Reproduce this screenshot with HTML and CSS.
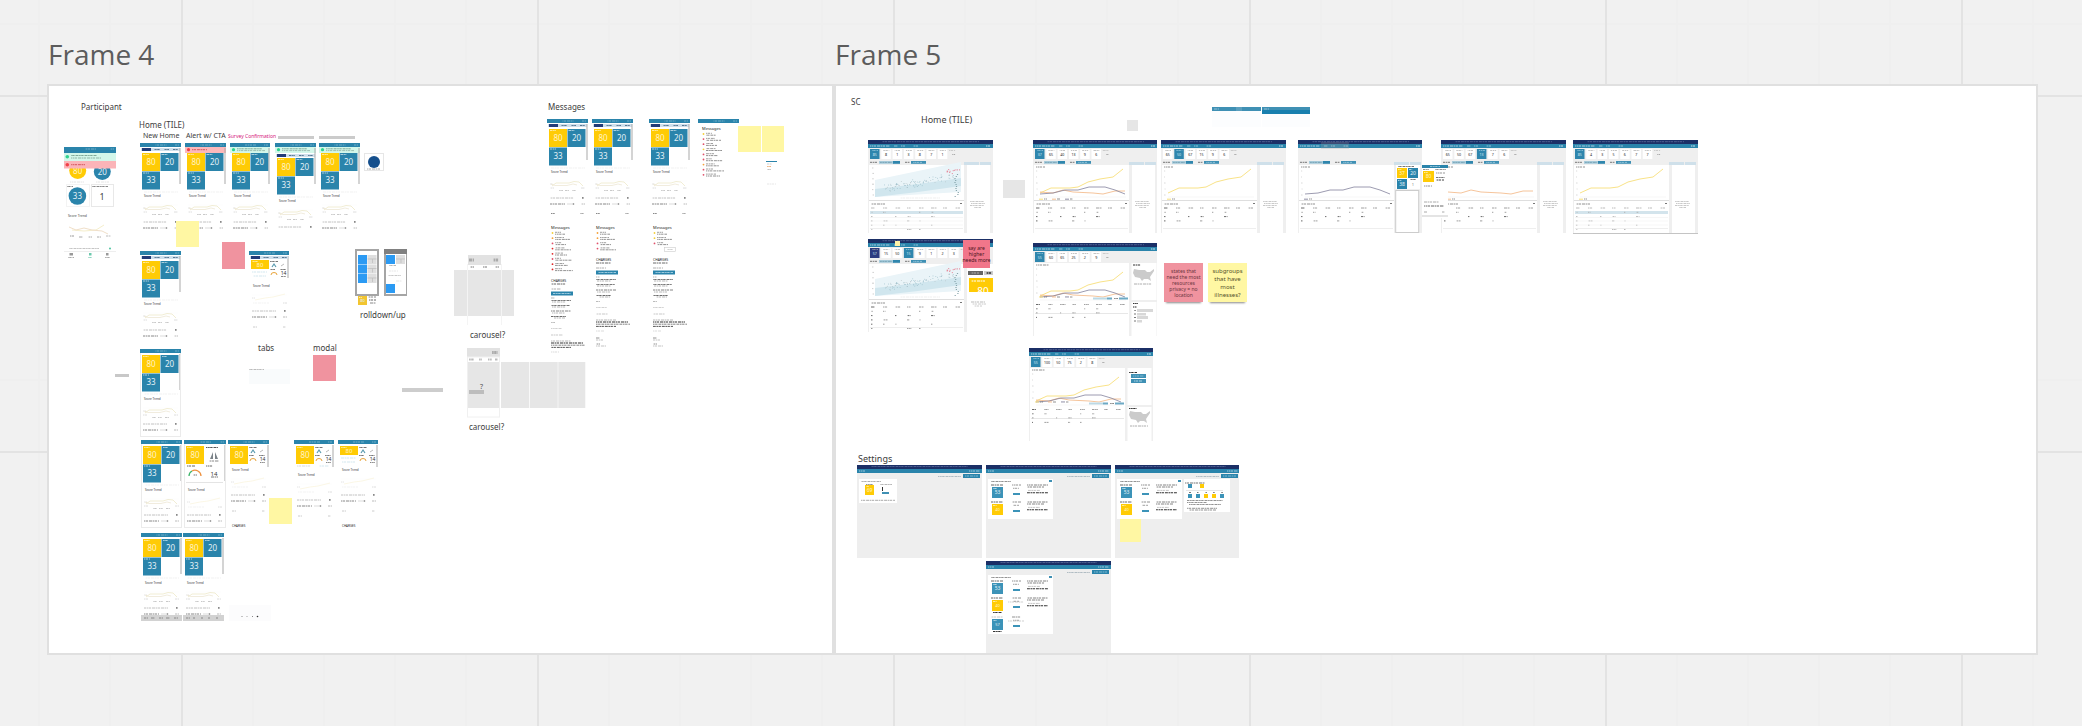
FILE: index.html
```html
<!DOCTYPE html>
<html lang="en">
<head>
  <meta charset="UTF-8" />
  <meta name="viewport" content="width=device-width, initial-scale=1.0" />
  <title>Board</title>
  <link rel="stylesheet" href="styles.css">
</head>
<body>
  <main class="board">
    <section class="frame frame-4">
      <h2>Frame 4</h2>
      <div class="canvas" id="frame4"></div>
    </section>
    <section class="frame frame-5">
      <h2>Frame 5</h2>
      <div class="canvas" id="frame5"></div>
    </section>
  </main>
  <script src="script.js"></script>
</body>
</html>
```

FILE: styles.css
```css
* {
  box-sizing: border-box;
}
body {
  margin: 0;
  background-color: #f1f1f1;
  background-image:
    linear-gradient(90deg, #e3e3e3 2px, transparent 2px),
    linear-gradient(#e3e3e3 2px, transparent 2px),
    linear-gradient(90deg, transparent 71px, #efefef 71px, #efefef 73px, transparent 73px, transparent 142px, #efefef 142px, #efefef 144px, transparent 144px, transparent 213px, #efefef 213px, #efefef 215px, transparent 215px, transparent 284px, #efefef 284px, #efefef 286px, transparent 286px),
    linear-gradient(transparent 284px, #efefef 284px, #efefef 286px, transparent 286px);
  background-size: 356px 356px;
  background-position: 181px 95px;
  font-family: "Noto Sans", "Open Sans", sans-serif;
  color: #3c3c3c;
}
.board {
  display: flex;
  height: 100vh;
  padding: 34px 44px 71px 47px;
}
.frame {
  display: flex;
  flex-direction: column;
  min-width: 0;
}
.frame-4 {
  flex: 787 1 0;
}
.frame-5 {
  flex: 1204 1 0;
}
.frame h2 {
  margin: 0;
  padding-left: 1px;
  height: 50px;
  font-family: "Open Sans", sans-serif;
  font-size: 28px;
  line-height: 40px;
  font-weight: 400;
  color: #5c5c5c;
}
.canvas {
  position: relative;
  flex: 1;
  background: #fff;
  border: 2px solid #e0e0e0;
  overflow: hidden;
}

/* widgets placed on the canvas */
.item {
  position: absolute;
  display: block;
  overflow: hidden;
}
.label {
  position: absolute;
  white-space: nowrap;
  line-height: 12px;
  font-size: 8px;
}
.label.small {
  font-size: 7px;
}
.label.tiny {
  font-size: 5px;
  color: #d6207c;
}
.label.large {
  font-size: 9px;
}
.sticky {
  position: absolute;
  display: flex;
  align-items: center;
  justify-content: center;
  text-align: center;
  white-space: nowrap;
  font-size: 5px;
  line-height: 6px;
  color: #6b3540;
}
.sticky.yellow {
  background: #fff7a3;
  color: #54512c;
}
.sticky.pink {
  background: #f0939f;
}
.sticky.deep {
  background: #f1768a;
  color: #4a1420;
}
.sticky.big {
  font-size: 6px;
  line-height: 8px;
}
.sticky.lifted {
  box-shadow: 0 3px 2px -2px #888;
}
svg text {
  font-family: "Noto Sans", "Open Sans", sans-serif;
}
```

FILE: script.js
```js
const BLUE = "#2a84ab";
const NAVY = "#1b2f66";
const YELLOW = "#ffcb05";

// top left corner of each canvas on the board
const frames = {
  frame4: { x: 49, y: 86 },
  frame5: { x: 836, y: 86 }
};

const rect = (x, y, w, h, fill, extra = "") =>
  `<rect x="${x}" y="${y}" width="${w}" height="${h}" fill="${fill}" ${extra}/>`;

const line = (points, color, width = 1) =>
  `<polyline points="${points}" fill="none" stroke="${color}" stroke-width="${width}"/>`;

const text = (x, y, size, color, value, anchor = "middle") =>
  `<text x="${x}" y="${y}" font-size="${size}" fill="${color}" text-anchor="${anchor}">${value}</text>`;

// a line of copy at thumbnail scale
const copy = (x, y, w, color = "#aaa", h = 1) =>
  `<line x1="${x}" y1="${y}" x2="${x + w}" y2="${y}" stroke="${color}" stroke-width="${h}" stroke-dasharray="3 .6 1.6 .5 2.4 .9" stroke-dashoffset="${(x * 7 + y * 3) % 5}"/>`;

const dot = (x, y, r, fill) => `<circle cx="${x}" cy="${y}" r="${r}" fill="${fill}"/>`;

function tile(x, y, w, h, color, value, size = 8) {
  return rect(x, y, w, h, color) +
    copy(x + 1, y + 1.5, w / 3, "#fff9") +
    (value ? text(x + w / 2, y + h / 2 + size * 0.36, size, color === YELLOW ? "#fff3c4" : "#e3f1f7", value) : "");
}

function bar(w, h = 4) {
  return rect(0, 0, w, h, BLUE) + copy(w / 2 - 5, 2, 11, "#6fadc8") + copy(w - 6, 2, 4, "#6fadc8");
}

function alertBar(w, y, bg, color) {
  return rect(0, y, w, 6, bg) + dot(3.5, y + 2.7, 1.6, color) +
    (color === "#2fd38f" ? copy(7, y + 1.8, 25, "#7fa898") + copy(7, y + 3.6, 28, "#9dbfb2") : copy(7, y + 2.7, 15, "#d3585c"));
}

function nav(w, y) {
  return rect(1, y, w - 2, 3, "#cfdfeb") + rect(2, y, 9, 3, "#233c78") +
    copy(14, y + 1.5, 6, "#5a7893") + copy(24, y + 1.5, 5, "#5a7893") + copy(33, y + 1.5, 5, "#5a7893");
}

function trend(y, flat) {
  let out = text(4, y + 4, 3, "#333", "Score Trend", "start") +
    line(`3,${y + 12} 38,${y + 12}`, "#f8f8f8", 0.5) + copy(3, y + 15, 3, "#ddd", 0.8);
  if (flat) {
    out += line(`6,${y + 17} 16,${y + 15} 24,${y + 14} 36,${y + 11}`, "#faf5df", 0.8) +
      copy(4, y + 20, 16, "#eee", 0.7) + copy(34, y + 20, 4, "#d5d5d5", 0.8);
  } else {
    out += line(`5,${y + 17} 9,${y + 14} 22,${y + 14} 27,${y + 12.5} 32,${y + 13} 36,${y + 17}`, "#eee8c9", 0.8) +
      line(`4,${y + 15} 8,${y + 16.5} 20,${y + 16.5} 26,${y + 15} 30,${y + 16}`, "#e8dfc8", 0.6) +
      copy(3, y + 19, 4, "#d5d5d5", 0.8) + copy(34, y + 19, 4, "#d5d5d5", 0.8) +
      copy(12, y + 21.5, 4, "#bbb", 0.8) + copy(18, y + 21.5, 4, "#bbb", 0.8) + copy(25, y + 21.5, 4, "#bbb", 0.8);
  }
  return out;
}

function lastRows(y) {
  return copy(3, y, 24, "#c2c2c2") + rect(35, y - 1, 1.6, 1.8, "#888") +
    copy(3, y + 6, 15, "#888") + line(`20,${y + 6} 26,${y + 6}`, "#ccc", 0.7) + dot(26.5, y + 6, 0.8, "#777") + copy(34, y + 6, 4, "#bbb");
}

function miniIcons(x, y) {
  return copy(x, y + 1.5, 8, "#777") +
    line(`${x + 2},${y + 7} ${x + 4},${y + 4} ${x + 6},${y + 7}`, "#5a9bb0", 1.2) +
    line(`${x + 11},${y + 6} ${x + 14},${y + 4}`, "#bbb") +
    copy(x, y + 9.5, 5, "#777") + copy(x + 10, y + 9.5, 6, "#777") +
    `<path d="M${x + 1} ${y + 15}a3 2.5 0 0 1 6 0" fill="none" stroke="#e9a53c"/>` +
    text(x + 13.5, y + 15, 5, "#333", "14") + copy(x + 11, y + 16.5, 5, "#888");
}

function tiles(top) {
  return tile(2, top, 18, 18, YELLOW, "80") + tile(20.5, top, 18, 18, BLUE, "20") + tile(2, top + 18.5, 18, 18, BLUE, "33") +
    copy(4, top + 39, 34, "#e8e8e8", 0.6);
}

function phone(o) {
  const w = o.w || 41, h = o.h || 88;
  let s = bar(w);
  let top = 6;
  if (o.alert === "green") { s += alertBar(w, 4, "#d3f7ea", "#2fd38f"); top = 10; }
  if (o.alert === "red") { s += alertBar(w, 4, "#fbb9bb", "#f04048"); top = 10; }
  if (o.nav) { s += nav(w, o.alert ? 11 : 5); top = o.alert ? 15 : 10; }
  if (o.kind === "grid") {
    s += tile(2, 6, 18, 18, YELLOW, "80") + copy(22, 7.5, 12, "#555") +
      `<path d="M26 19l3-7v7zM34 19l-3-7v7z" fill="#7a8288"/>` + copy(25, 21, 10, "#888") +
      copy(3, 26, 8, "#666") + copy(22, 26, 7, "#666") +
      `<path d="M5 36a6 6 0 0 1 3-5" fill="none" stroke="#3fb56b" stroke-width="1.3"/><path d="M8 31a6 6 0 0 1 9 5" fill="none" stroke="#ee9240" stroke-width="1.3"/>` +
      copy(9, 35, 4, "#777") + text(30, 35.5, 6, "#333", "14") + copy(27, 37, 7, "#777") +
      line("2,42.5 39,42.5", "#ddd", 0.8) + trend(47, true) + lastRows(75);
  } else if (o.kind === "compact") {
    const t = o.nav ? 9 : 6;
    const sh = o.shift || 0;
    const d = sh + (o.nav ? 5 : 0);
    s += tile(2, t, 18, o.short ? 9 : 18, YELLOW, "80", o.short ? 6 : 8) + miniIcons(21, t);
    if (o.short) s += copy(3, t + 12, 15, "#c0dce8", 0.7) + copy(4, t + 16, 13, "#c0dce8", 0.7);
    if (sh) s += copy(3, 26, 14, "#ccc", 0.7) + copy(25, 26, 10, "#c0dce8", 0.7);
    s += trend(27 + d, true) + lastRows(55 + d) + copy(4, 71 + d, 4, "#ccc") + copy(34, 71 + d, 3, "#ccc");
    if (o.charges) s += text(4, 86.5, 3, "#222", "CHARGES", "start");
  } else {
    s += tiles(top) + trend(o.nav || o.alert ? top + 40 : 47) + lastRows(o.nav || o.alert ? top + 69 : 75);
  }
  s += rect(w - 1.5, 5, 1, o.kind === "compact" ? 22 : 36, "#aaa");
  if (o.footer) {
    s += rect(0, h - 6, w, 6, "#d2d2d2");
    for (const x of [3, 10, 18, 25, 33]) s += copy(x, h - 3, o.footer === 2 && x > 3 ? 2 : 4, "#8a8a8a");
  }
  if (o.border) s += rect(0.5, 0.5, w - 1, h - 1, "none", 'stroke="#ebebeb"') + bar(w);
  return s;
}

function circlePhone() {
  return rect(0, 0, 52, 112, "#fff") +
    dot(13.7, 23.6, 8.5, YELLOW) + text(13.7, 26.5, 8, "#fff3c4", "80") +
    dot(38.3, 24.5, 8.5, BLUE) + text(38.3, 27.5, 8, "#e3f1f7", "20") +
    bar(52, 6) + rect(0, 6, 52, 8, "#d3f7ea") + dot(3.3, 9.7, 1.8, "#2fd38f") + copy(7, 8.5, 26, "#7fa898") + copy(7, 11, 30, "#8fb5a6") +
    rect(0, 14, 52, 7.5, "#fbb4b8") + dot(3.3, 17.7, 1.8, "#f04048") + copy(7, 17.7, 14, "#d3585c") +
    copy(6, 35, 14, "#e4e4e4") + copy(32, 35, 13, "#e4e4e4") + copy(3, 39.5, 6, "#888") + copy(28, 39.5, 16, "#888") +
    rect(2.5, 37.5, 23, 22, "none", 'stroke="#f3f3f3"') + rect(27.5, 37.5, 22, 22, "none", 'stroke="#e8e8e8"') +
    dot(13.4, 49, 8.8, BLUE) + text(13.4, 52, 8, "#e3f1f7", "33") + text(38, 52.5, 9, "#444", "1") +
    text(4, 70, 3.4, "#444", "Score Trend", "start") +
    line("8,83 20,84 32,83 40,78", "#f5eecb") + line("5,80 12,83 20,81 28,83 38,84 44,87", "#f0dfc9") +
    copy(6, 89, 4, "#999") + copy(42, 89, 5, "#bbb") + copy(15, 90, 4, "#aaa") + copy(24, 90, 4, "#aaa") + copy(33, 90, 4, "#aaa") +
    copy(5, 101.5, 30, "#c5c5c5") + dot(46, 101.5, 1, "#4cc3a0") +
    line("0,104.5 52,104.5", "#eee") + rect(5.5, 106, 3.5, 2.5, "#999") + rect(25, 106, 2.5, 2.5, "#6cc9ae") + rect(42, 106, 2.5, 2.5, "#999") +
    copy(4, 110.5, 6, "#aaa") + copy(24, 110.5, 4, "#8fd5c0") + copy(41, 110.5, 5, "#aaa");
}

function messageList(y, colors, gap = 5.2) {
  let s = text(4, y + 1.5, 4, "#222", "Messages", "start");
  colors.forEach((c, i) => {
    const r = y + 6 + i * gap;
    s += dot(5.5, r, 0.9, c) + copy(8, r - 0.7, 6 + (i * 3) % 5, "#777", 0.7) + copy(8, r + 1.2, 10 + (i * 5) % 9, "#777", 0.8);
  });
  return s;
}

function messagePhone(o) {
  let s = phone({ nav: true }) + copy(4, 94.5, 4, "#888") + copy(33, 94.5, 4, "#aaa") + messageList(108, o.rows);
  if (o.more) s += rect(15.5, 128.5, 11, 4, "#fff", 'stroke="#ccc" stroke-width=".6"') + copy(18, 130.5, 6, "#bbb", 0.7);
  const y = o.charges;
  return s + text(4, y + 2, 3.4, "#222", "CHARGES", "start") + copy(4, y + 4, 15, "#444", 0.8) +
    copy(4, y + 9, 10, "#999", 0.8) + rect(4, y + 11.5, 22, 4, BLUE) + copy(6, y + 13.5, 18, "#9dcbdf") +
    copy(4, y + 18, 4, "#999", 0.7) + copy(4, y + 20.5, 20, "#555", 0.8) + copy(5, y + 22, 14, "#999", 0.7) +
    copy(4, y + 25.5, 19, "#555", 0.8) + copy(5, y + 27, 14, "#999", 0.7) + copy(4, y + 31, 20, "#666", 0.8) + copy(5, y + 33, 13, "#999", 0.7) +
    copy(4, y + 36.5, 15, "#444", 0.8) + copy(7, y + 38, 11, "#999", 0.7) + copy(4, y + 42.5, 4, "#aaa", 0.8) +
    copy(4, y + 48.5, 11, "#c5c5c5", 0.8) + copy(4, y + 55, 12, "#bbb", 0.8) +
    copy(4, y + 61, 20, "#999", 0.7) + copy(4, y + 63, 32, "#333") + copy(4, y + 65.2, 34, "#666", 0.8) + copy(4, y + 67.4, 20, "#444", 0.9) + copy(4, y + 72, 8, "#ccc", 0.7) +
    (y < 150 ? copy(4, y + 79, 4, "#777", 0.8) + copy(4, y + 81, 7, "#aaa", 0.7) + copy(4, y + 85, 4, "#777", 0.8) + copy(4, y + 87, 10, "#aaa", 0.7) : "");
}

// repeatable noise, so the plot looks the same on each load
const noise = (n) => {
  const v = Math.sin(n * 12.9898) * 43758.5453;
  return v - Math.floor(v);
};

function scatter() {
  let s = `<path d="M7 40L93 22V52L7 57z" fill="#eaf4f8"/><path d="M7 49L50 44L93 38V46L50 52L7 57z" fill="#d0e6ee"/>`;
  for (let i = 0; i < 90; i++) {
    const x = 16 + noise(i + 1) * 70;
    const y = 50 - (x - 16) * 0.17 + noise(i + 200) * 8 - 6;
    s += rect(x.toFixed(1), y.toFixed(1), 0.8, 0.7, i % 3 ? "#94b9c5" : "#b3bfc3");
  }
  for (let i = 0; i < 12; i++) s += rect((77 + noise(i + 40) * 15).toFixed(1), (29 + noise(i + 60) * 5).toFixed(1), 1, 1, "#e58295");
  for (let i = 0; i < 12; i++) s += rect((86 + noise(i + 80) * 4).toFixed(1), 34 + i * 2, 1.2, 0.9, "#7c9ca3");
  for (let i = 0; i < 6; i++) s += copy(4, 28 + i * 5.4, 2, "#bbb", 0.7);
  return s + copy(32, 58, 40, "#e4e4e4", 0.6);
}

const curves = {
  yellow: ["7,53 18,48 37,48 45,47 55,42 67,39 80,37 90,29", "#f6da6a"],
  navy: ["7,54 20,53 32,50 45,50 56,47 72,47 82,50 92,54", "#83829c"],
  orange: ["7,52 20,53 30,50 40,52 60,53 70,54 82,51 92,51", "#f2b582"]
};

const usMap = (x, y) =>
  `<path transform="translate(${x} ${y})" d="M1 1L6 2L12 2L14 4L17 4L21 1L21 3L19 6L17 9L18 13L15 11L11 11L9 13L7 10L2 9L0 5z" fill="#cbcbcb"/>` +
  copy(x + 1, y + 16, 18, "#999", 0.8);

function table(y, w, rows, hl) {
  let s = "";
  if (hl !== undefined) s += rect(2, y + 3, w - 1, 3, "#d3e4ec");
  for (let r = 0; r < rows; r++) {
    const ry = y + r * 4.3;
    for (let c = 0; c < 8; c++) {
      if (r && (c * 5 + r * 3) % 7 > 3 && c) continue;
      const cw = r ? 1.5 + (c * r) % 4 : 4 + (c % 3);
      if (r && c > 5) continue;
      s += copy(3 + c * 12, ry, cw, hl ? "#aaa" : r === 2 || c === 0 ? "#444" : "#888", 0.8);
    }
  }
  return s;
}

function dashboard(o) {
  const w = 124, alt = o.side === "map" || o.side === "buttons";
  const bodyTop = alt ? 20 : 25;
  let s = rect(0, 0, w + 1, 93, "#efefef") + rect(0, 0, w + 1, 4, NAVY) + copy(14, 1.7, 97, "#6472a0", 0.7) +
    rect(0, 4, w + 1, 4, BLUE) + copy(2, 6, 20, "#b5d7e6", 0.9) + copy(26, 6, 4, "#8fc0d6") + copy(33, 6, 4, "#8fc0d6") + copy(45, 6, 5, "#8fc0d6") + copy(118, 6, 4, "#c4e0ec");
  const vals = o.cards || [];
  vals.forEach((v, i) => {
    const x = 2 + i * 11.3, on = i === o.active;
    s += rect(x, 9, 9.5, 10, i === 0 && o.first ? o.first : on ? "#2f86ad" : "#fff") + copy(x + 2, 10.5, 6, on ? "#9ccbe0" : "#aaa", 0.7) +
      text(x + 4.7, 15.6, 3.6, on || (i === 0 && o.first) ? "#cfe8f3" : "#222", v);
  });
  if (vals.length) s += copy(2 + vals.length * 11.3, 10.5, 6, "#bbb", 0.7) + copy(5 + vals.length * 11.3, 14.5, 3, "#aaa");
  if (!alt) {
    s += copy(2, 22.3, 7, "#777") + rect(11, 21, 15, 2.8, "#a9ccdc") + rect(25, 21, 7, 2.8, "#2f86ad") + copy(12, 22.4, 12, "#7ba6b8") +
      copy(37, 22.3, 5, "#777") + rect(43, 21, 15, 2.8, "#3f90b4") + copy(45, 22.4, 9, "#8cc0d6") +
      rect(96, 22, 15, 3, "#cfe0ea") + rect(112, 22, 11, 3, "#cfe0ea");
  }
  s += rect(1, bodyTop, 95, 93 - bodyTop, "#fff");
  if (o.curves) {
    s += copy(3, bodyTop + 2, alt ? 13 : 9, "#777", 0.8);
    for (let i = 0; i < 5; i++) s += copy(3, bodyTop + 6 + i * 6, 1.6, "#ccc", 0.7);
    s += line("7,57 93,57", "#f2f2f2", 0.6);
    for (const c of o.curves) s += line(curves[c][0], curves[c][1], 0.8);
    o.curves.forEach((c, i) => {
      s += rect(6 + i * 13, alt ? 53.5 : 58.7, 4, 0.9, curves[c][1]) + copy(11 + i * 13, alt ? 54 : 59, 3, "#777", 0.8);
    });
  } else {
    s += scatter();
  }
  if (alt) {
    s += rect(60, 54.5, 14, 2, "#bcd9e5") + rect(74, 54.5, 5, 2, "#6daac5") + rect(86, 54.5, 9, 2, "#6daac5") + copy(81, 55.5, 4, "#888") +
      table(61.5, 94, 4) + line("2,70.5 95,70.5", "#ddd", 0.7);
  } else {
    s += line("1,60.5 96,60.5", "#d5d5d5", 0.8) + copy(3, 64, 14, "#777", 0.8) + rect(92, 63, 2, 1, "#777") +
      table(68, 94, o.curves && !o.hl ? 4 : 6, o.hl) + line("2,88.5 95,88.5", "#e6e6e6", 0.7);
  }
  if (o.hl) for (const y of [77.5, 81, 85]) s += line(`2,${y} 95,${y}`, "#ececec", 0.5);

  if (o.side === "map") {
    s += rect(98.5, 20, 25, 37, "#fff") + rect(98.5, 59, 25, 34, "#fff") + copy(100, 22, 8, "#333") + usMap(100, 25) + copy(100, 60.5, 5, "#333") + copy(100, 64, 4, "#222") +
      rect(104, 66, 16, 3, "#d8d8d8") + rect(104, 70, 9, 2.5, "#d8d8d8") + rect(104, 73, 11, 3, "#d8d8d8") + rect(104, 77, 5, 2.5, "#d8d8d8");
    for (const y of [67.5, 71, 74.5, 78]) s += copy(101, y, 2, "#777");
  } else if (o.side === "buttons") {
    s += rect(98.5, 20, 24, 37, "#fff") + rect(98.5, 59, 24, 34, "#fff") + copy(100, 24.5, 8, "#333") + rect(102, 26, 15, 4, "#3f90b4") + rect(102, 31, 15, 4, "#3f90b4") +
      copy(104, 28, 11, "#7fb8d0") + copy(105, 33, 8, "#a9d2e3") + copy(100, 60.5, 8, "#333") + usMap(100, 62);
  } else if (o.side === "tiles") {
    s += rect(98, 25, 24, 24, "#fff") + copy(100, 26.5, 16, "#777") + tile(99, 28, 10, 10, YELLOW, "37", 5) + tile(110, 28, 10, 10, BLUE, "20", 5) + tile(99, 39, 10, 10, BLUE, "38", 5) +
      copy(112, 39.5, 6, "#777") + text(115, 46, 4, "#777", "1") + rect(97.7, 50.5, 23, 42, "#fff", 'stroke="#ccc"');
  } else if (o.side !== "none") {
    s += rect(99, 25, 23, 68, "#fff");
    for (let i = 0; i < 4; i++) s += copy(102 + (i === 3 ? 4 : i % 2), 61.5 + i * 2, i === 3 ? 7 : 14, "#bbb", 0.8);
  }
  return s;
}

function settings(o) {
  let s = rect(0, 0, 125, 93, "#eee") + rect(0, 0, 125, 4, NAVY) + copy(14, 1.5, 97, "#6472a0", 0.7) + rect(0, 4, 125, 4, BLUE) +
    copy(2, 6, 6, "#9cc8dc") + copy(112, 6, 11, "#9cc8dc") + rect(106, 9, 17, 4, BLUE) + copy(108, 11, 13, "#7fb8d0") + copy(81, 11.5, 23, "#b0bcc3");
  if (!o.rows) {
    return s + rect(2, 14, 38, 24, "#fff") + copy(4, 16.5, 20, "#999", 0.8) + copy(9, 19.5, 7, "#777", 0.8) + tile(8, 20, 9, 10, YELLOW, "69", 5) +
      copy(23, 19.5, 12, "#999", 0.7) + rect(25, 22, 1, 4, "#333") + rect(25, 27, 7, 2, "#3f90b4") + copy(4, 35.3, 34, "#aaa");
  }
  s += rect(2, 14, 65, o.rows === 3 ? 59 : 40, "#fff") + copy(5, 16.5, 20, "#777", 0.8) + rect(63, 15, 3, 2, "#3f90b4");
  for (let i = 0; i < o.rows; i++) {
    const y = 20 + i * (i === 2 ? 18 : 17);
    s += copy(5, y, 12, i < 2 ? "#444" : "#bbb", 0.8) + tile(6, y + 2, 11, 11, i === 1 ? YELLOW : "#3c93b8", i === 0 ? "53" : i === 1 ? "40" : "57", i ? 4 : 5) +
      copy(26, y, 9, "#777", 0.8) + copy(27, y + 3.3, 6, "#888", 0.8) + rect(27, y + 8, 7, 2, "#3c93b8");
    if (i < 2) s += copy(41, y, 21, "#666", 0.8) + copy(41, y + 2, 17, "#666", 0.8) + copy(42, y + 5.4, 12, "#aaa", 0.7) + copy(41, y + 7.7, 21, "#333", 1.1);
    if (o.rows === 3 && i) s += copy(7, y + 14.5, 9, "#333") + copy(22, y + 4, 16, "#bbb", 0.7);
  }
  if (o.extra) {
    s += rect(69, 14, 46, 33, "#fff") + copy(70, 18, 20, "#777") + rect(73, 19, 4, 4, "#3c93b8") + rect(85, 19, 4, 4, YELLOW) + line("71,25.5 108,25.5", "#ddd", 0.7);
    ["#3c93b8", "#3c93b8", YELLOW, YELLOW, "#3c93b8"].forEach((c, i) => {
      s += rect(73 + i * 8, 29, 4, 4, c) + copy(74 + i * 8, 27.5, 2, "#777");
    });
    for (const [x, y, w] of [[72, 35.5, 36], [72, 37.5, 20], [74, 39.5, 32], [72, 43.3, 30], [74, 45, 27]]) s += copy(x, y, w, "#777", 0.8);
  }
  return s;
}

function wirePhone(second) {
  let s = rect(1, 1, 22, 45, "#fff", 'stroke="#a5a5a5" stroke-width="2"');
  const cell = (x, y) => rect(x, y, 9, 9, "#dedede") + line(`${x},${y + 4} ${x + 9},${y + 4}`, "#bbb", 0.7) + line(`${x + 5},${y + 4} ${x + 5},${y + 8}`, "#bbb", 0.7);
  if (second) {
    return s + rect(0, 0, 24, 5, "#808080") + rect(2, 6, 9, 9, "#2b9af3") + cell(12, 6) + rect(2, 35, 9, 9, "#2b9af3") +
      copy(5, 16.5, 7, "#999", 0.7) + copy(5, 22, 9, "#ddd", 0.7) + copy(4, 26.5, 13, "#bbb", 0.8) + copy(12, 32, 6, "#ddd", 0.7);
  }
  for (const y of [6, 15.5, 25]) s += rect(3, y, 9, 9, "#2b9af3") + cell(12.5, y);
  return s;
}

function carousel(panels) {
  const g = "#e6e6e6";
  if (panels) {
    return rect(0, 0, 33, 9, "#e2e2e2") + copy(25, 4.5, 6, "#aaa", 3) + copy(2, 11.5, 5, "#bbb", 2) + copy(12, 11.5, 3, "#bbb", 2) + copy(21, 11.5, 4, "#bbb", 2) + copy(28, 11.5, 3, "#bbb", 2) +
      rect(0, 14, 33, 46, g) + rect(34, 14, 28, 46, g) + rect(62.7, 14, 28, 46, g) + rect(91.3, 14, 27, 46, g) + rect(0.5, 9, 32, 60, "none", 'stroke="#f0f0f0"') +
      text(14.5, 41, 7, "#555", "?") + rect(2, 42, 15, 4, "#bdbdbd");
  }
  return rect(14, 0, 33, 10, "#e2e2e2") + copy(15, 5, 5, "#aaa", 3) + copy(39, 5, 6, "#aaa", 3) + copy(16, 12, 4, "#bbb", 2) + copy(29, 12, 4, "#bbb", 2) + copy(41, 12, 4, "#bbb", 2) +
    rect(0, 15, 60, 46, g) + line("13.5,9 13.5,70", "#f4f4f4") + line("47.5,9 47.5,70", "#f4f4f4");
}

function phoneSnippet() {
  return rect(0, 0, 26, 53, "#fff") + rect(0, 0, 26, 3, BLUE) + copy(8, 1.5, 10, "#8fc0d6") + tile(1, 6, 11, 11, YELLOW, "80", 5) + copy(1, 4.5, 6, "#777", 0.8) + copy(13, 4.5, 11, "#777", 0.8) +
    copy(14, 8, 9, "#999") + copy(14, 12.5, 9, "#777") + copy(14, 15, 8, "#444") + copy(2, 21, 8, "#777", 0.8) + copy(2, 37, 15, "#aaa") + copy(2, 41, 20, "#666") + copy(2, 47, 3, "#aaa") + copy(20, 47, 3, "#aaa") + line("0,51 26,51", "#bbb", 0.8);
}

const block = (w, h, color) => rect(0, 0, w, h, color);
const O = "#f5a13a", P = "#e0506a", R = "#e02828", Y = "#f5cf3a";
const all = ["yellow", "orange", "navy"];
const deck = ["37", "65", "40", "13", "9", "6"];

// [frame, x, y, width, height, markup]
const items = [
  ["frame4", 64, 147, 52, 112, circlePhone()],
  ["frame4", 140, 143, 41, 88, phone({ nav: true })],
  ["frame4", 185, 143, 41, 88, phone({ alert: "red" })],
  ["frame4", 230, 143, 41, 88, phone({ alert: "green", w: 40 })],
  ["frame4", 275, 143, 41, 88, phone({ alert: "green", nav: true })],
  ["frame4", 319, 143, 41, 88, phone({ alert: "green" })],
  ["frame4", 278, 136, 36, 3, block(36, 3, "#cbcbcb")],
  ["frame4", 319, 136, 36, 3, block(36, 3, "#cbcbcb")],
  ["frame4", 364, 153, 20, 18, rect(0.5, 0.5, 19, 17, "#fff", 'stroke="#e6e6e6"') + dot(10, 9, 6, "#154f8c") + copy(3, 16, 13, "#aaa")],
  ["frame4", 140, 251, 41, 88, phone({ nav: true })],
  ["frame4", 249, 251, 40, 88, phone({ kind: "compact", nav: true, short: true, w: 40 }) + nav(40, 5)],
  ["frame4", 140, 349, 41, 88, phone({ border: true })],
  ["frame4", 141, 440, 41, 88, phone({ border: true })],
  ["frame4", 184, 440, 42, 88, phone({ kind: "grid", border: true, w: 42 })],
  ["frame4", 228, 440, 41, 88, phone({ kind: "compact", charges: true })],
  ["frame4", 294, 440, 40, 88, phone({ kind: "compact", shift: 5, w: 40 })],
  ["frame4", 338, 440, 40, 88, phone({ kind: "compact", short: true, charges: true, w: 40 })],
  ["frame4", 141, 533, 41, 88, phone({ footer: 1 })],
  ["frame4", 183, 533, 41, 88, phone({ footer: 2 })],
  ["frame4", 229, 605, 45, 16, rect(0, 0, 42, 16, "#fcfcfd") + dot(13, 11.5, 0.5, "#666") + dot(18, 11.5, 0.5, "#888") + dot(23.5, 11.5, 0.5, "#666") + dot(28.5, 11.5, 0.8, "#333")],
  ["frame4", 115, 374, 14, 3, block(14, 3, "#c8c8c8")],
  ["frame4", 249, 368, 41, 16, rect(0, 1, 41, 15, "#f9fbfc") + copy(0, 1.5, 15, "#bbb")],
  ["frame4", 355, 249, 24, 47, wirePhone()],
  ["frame4", 384, 249, 23, 47, wirePhone(true)],
  ["frame4", 358, 296, 20, 10, tile(0, 0, 9, 9, "#f2c530", "80", 4) + copy(10, 1, 8, "#888") + copy(11, 4, 7, "#666") + copy(12, 7, 6, "#888")],
  ["frame4", 454, 255, 60, 70, carousel()],
  ["frame4", 467, 348, 119, 70, carousel(true)],
  ["frame4", 402, 388, 41, 4, block(41, 4, "#cdcdcd")],
  ["frame4", 547, 119, 41, 236, messagePhone({ rows: [Y, O, P, R, R, P, R, R], charges: 161 })],
  ["frame4", 592, 119, 41, 236, messagePhone({ rows: [O, O, P, P], charges: 140 })],
  ["frame4", 649, 119, 41, 236, messagePhone({ rows: [Y, Y, P], more: true, charges: 140 })],
  ["frame4", 698, 119, 41, 88, bar(41) + messageList(9, [Y, P, P, Y, P, P, O, P, P], 5.1)],
  ["frame4", 766, 161, 12, 25, rect(0, 0, 11, 1, BLUE) + copy(1, 3, 5, "#bbb", 0.7) + copy(1, 5.5, 4, "#e8a060", 0.8) + copy(1, 8.5, 4, "#aaa", 0.8) + copy(1, 23, 9, "#ddd", 0.7)],

  ["frame5", 868, 140, 125, 93, dashboard({ cards: ["85", "8", "1", "3", "8", "7", "1"], active: 0, hl: true })],
  ["frame5", 1033, 140, 124, 93, dashboard({ cards: deck, active: 0, curves: all })],
  ["frame5", 1161, 140, 125, 93, dashboard({ cards: ["65", "50", "67", "15", "9", "6"], active: 1, curves: ["yellow"] })],
  ["frame5", 1298, 140, 124, 93, dashboard({ curves: ["navy"], side: "tiles" }) + rect(23, 2, 28, 7, "#a09aa040")],
  ["frame5", 1441, 140, 125, 93, dashboard({ cards: ["65", "50", "67", "13", "7", "6"], active: 3, curves: ["orange"] })],
  ["frame5", 1422, 165, 26, 53, phoneSnippet()],
  ["frame5", 1573, 140, 125, 94, dashboard({ cards: ["85", "4", "3", "5", "6", "7", "7"], active: 0, curves: ["yellow"], hl: true }) + rect(0, 93, 125, 1, "#c4c4c4")],
  ["frame5", 868, 239, 125, 93, dashboard({ cards: ["57", "15", "50", "15", "9", "1", "2", "3"], active: 3, first: "#2c3b80", side: "none" }) +
    rect(99, 25, 26, 68, "#fff") + rect(27, 2, 5, 5, "#fff3a8") + rect(100, 32, 15, 4, "#666") + rect(116, 32, 9, 4, "#ccc") + copy(118, 34, 6, "#555", 2) + copy(103, 34, 8, "#aaa") +
    `<svg x="101" y="39" width="24" height="14">${rect(0, 0, 24, 14, YELLOW)}${copy(2, 3, 14, "#fff")}${text(14, 17, 10, "#fff", "80")}</svg>` +
    copy(103, 63, 14, "#bbb") + copy(104, 65, 14, "#ccc") + copy(106, 67, 8, "#ccc")],
  ["frame5", 1033, 243, 124, 93, dashboard({ cards: ["55", "60", "65", "25", "2", "9"], active: 0, curves: all, side: "map" })],
  ["frame5", 1029, 348, 124, 93, dashboard({ cards: ["55", "100", "50", "75", "2", "8"], active: 0, curves: all, side: "buttons" })],
  ["frame5", 1003, 180, 22, 18, block(22, 18, "#e6e6e6")],
  ["frame5", 1127, 120, 11, 11, block(11, 11, "#e6e6e6")],
  ["frame5", 1212, 107, 49, 20, rect(0, 0, 49, 20, "#fcfdfe") + rect(0, 0, 49, 4, "#3f90b4") + rect(24, 0, 6, 4, "#5b9fbe") + copy(2, 2, 5, "#8fc0d6")],
  ["frame5", 1262, 107, 48, 20, rect(0, 0, 48, 20, "#fcfdfe") + rect(0, 0, 48, 7, "#187fae") + rect(0, 0, 48, 3, "#3f90b4") + copy(2, 2, 5, "#8fc0d6")],
  ["frame5", 857, 465, 125, 93, settings({})],
  ["frame5", 986, 465, 125, 93, settings({ rows: 2 })],
  ["frame5", 1115, 465, 124, 93, settings({ rows: 2, extra: true })],
  ["frame5", 986, 561, 125, 93, settings({ rows: 3 })]
];

// [frame, x, y, size class, text]
const labels = [
  ["frame4", 81, 101, "", "Participant"],
  ["frame4", 139, 119, "", "Home (TILE)"],
  ["frame4", 143, 130, "small", "New Home"],
  ["frame4", 186, 130, "small", "Alert w/ CTA"],
  ["frame4", 228, 130, "tiny", "Survey Confirmation"],
  ["frame4", 548, 101, "", "Messages"],
  ["frame4", 360, 309, "", "rolldown/up"],
  ["frame4", 470, 329, "", "carousel?"],
  ["frame4", 469, 421, "", "carousel?"],
  ["frame4", 258, 342, "", "tabs"],
  ["frame4", 313, 342, "", "modal"],
  ["frame5", 851, 96, "", "SC"],
  ["frame5", 921, 114, "large", "Home (TILE)"],
  ["frame5", 858, 453, "large", "Settings"]
];

// [frame, x, y, width, height, classes, text]
const stickies = [
  ["frame4", 176, 221, 23, 26, "yellow", ""],
  ["frame4", 222, 242, 23, 27, "pink", ""],
  ["frame4", 313, 355, 23, 26, "pink", ""],
  ["frame4", 269, 498, 23, 26, "yellow", ""],
  ["frame4", 738, 126, 23, 26, "yellow", ""],
  ["frame4", 762, 126, 22, 26, "yellow", ""],
  ["frame5", 963, 240, 27, 28, "deep", "say are<br>higher<br>needs more"],
  ["frame5", 1164, 263, 39, 39, "pink lifted", "states that<br>need the most<br>resources<br>privacy = no<br>location"],
  ["frame5", 1208, 263, 39, 39, "yellow big lifted", "subgroups<br>that have<br>most<br>illnesses?"],
  ["frame5", 1120, 519, 21, 23, "yellow", ""]
];

function place(frame, x, y, w, h) {
  const f = frames[frame];
  return `left:${x - f.x}px;top:${y - f.y}px;` + (w ? `width:${w}px;height:${h}px` : "");
}

function add(frame, html) {
  document.getElementById(frame).insertAdjacentHTML("beforeend", html);
}

items.forEach(([f, x, y, w, h, svg]) =>
  add(f, `<svg class="item" style="${place(f, x, y, w, h)}" viewBox="0 0 ${w} ${h}">${svg}</svg>`));

stickies.forEach(([f, x, y, w, h, cls, value]) =>
  add(f, `<div class="sticky ${cls}" style="${place(f, x, y, w, h)}">${value ? `<span>${value}</span>` : ""}</div>`));

labels.forEach(([f, x, y, cls, value]) =>
  add(f, `<span class="label ${cls}" style="${place(f, x, y)}">${value}</span>`));
```
